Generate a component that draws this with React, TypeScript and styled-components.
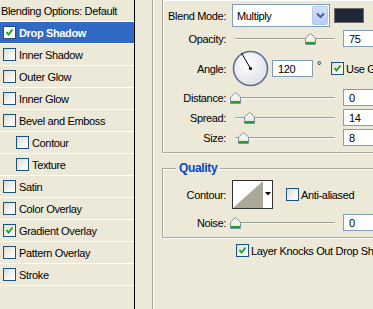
import React from 'react'
import styled, { createGlobalStyle } from 'styled-components'

const GlobalStyle = createGlobalStyle`
  html, body {
    margin: 0;
    padding: 0;
    background: #ece9d8;
    overflow: hidden;
  }
  body {
    font-family: 'Liberation Sans', Arial, sans-serif;
    font-size: 11px;
    letter-spacing: -0.35px;
    color: #000;
  }
`

const Window = styled.div`
  display: flex;
  width: 373px;
  height: 309px;
  overflow: hidden;
  background: #ece9d8;
`

/* ---------- left style list ---------- */

const Sidebar = styled.div`
  width: 134px;
  flex: none;
  border-right: 1px solid #000;
  display: flex;
  flex-direction: column;
`

const ListRow = styled.div<{ $indent?: boolean; $selected?: boolean; $plain?: boolean }>`
  height: 21px;
  border-bottom: 1px solid #fff;
  display: flex;
  align-items: center;
  gap: 3px;
  padding-left: ${({ $indent, $plain }) => ($plain ? '1px' : $indent ? '16px' : '3px')};
  background: ${({ $selected }) => ($selected ? '#316ac5' : 'transparent')};
  color: ${({ $selected }) => ($selected ? '#fff' : '#000')};
  font-weight: ${({ $selected }) => ($selected ? 'bold' : 'normal')};
  white-space: nowrap;
`

const Box = styled.span<{ $flat?: boolean }>`
  width: 13px;
  height: 13px;
  box-sizing: border-box;
  flex: none;
  border: 1px solid #1c5180;
  background: ${({ $flat }) => ($flat ? '#fff' : 'linear-gradient(135deg, #dcdcd7 0%, #f4f4f0 60%, #ffffff 100%)')};
  display: inline-flex;
  align-items: center;
  justify-content: center;
`

const Checkbox = ({ checked, flat }: { checked?: boolean; flat?: boolean }) => (
  <Box $flat={flat}>
    {checked && (
      <svg width="9" height="9" viewBox="0 0 9 9">
        <path d="M1.5 4 L3.5 6.5 L7.5 1.5" fill="none" stroke="#21a121" strokeWidth="2" />
      </svg>
    )}
  </Box>
)

const styles = [
  { name: 'Drop Shadow', checked: true, selected: true },
  { name: 'Inner Shadow' },
  { name: 'Outer Glow' },
  { name: 'Inner Glow' },
  { name: 'Bevel and Emboss' },
  { name: 'Contour', indent: true },
  { name: 'Texture', indent: true },
  { name: 'Satin' },
  { name: 'Color Overlay' },
  { name: 'Gradient Overlay', checked: true },
  { name: 'Pattern Overlay' },
  { name: 'Stroke' },
]

/* ---------- right settings pane ---------- */

const Pane = styled.div`
  flex: 1;
  padding-left: 17px;
  overflow: hidden;
`

const OuterGroup = styled.div`
  height: 100%;
  border-left: 1px solid #aca899;
  box-shadow: inset 1px 0 0 #fff;
  padding-left: 9px;
`

const Group = styled.div`
  width: 260px;
  border: 1px solid #aca899;
  box-shadow: inset 1px 1px 0 #fff, 1px 1px 0 #fff;
`

const StructureGroup = styled(Group)`
  border-top: none;
  padding: 4px 0 6px;
`

const QualityGroup = styled(Group)`
  margin-top: 15px;
  padding-bottom: 6px;
`

const GroupTitle = styled.div`
  width: fit-content;
  height: 13px;
  margin: -7px 0 0 13px;
  padding: 0 3px;
  background: #ece9d8;
  color: #0046d5;
  font-weight: bold;
  font-size: 12px;
  line-height: 13px;
`

const Row = styled.div<{ $h: number; $mt?: number }>`
  display: flex;
  align-items: center;
  height: ${({ $h }) => $h}px;
  margin-top: ${({ $mt = 0 }) => $mt}px;
  white-space: nowrap;
`

const Label = styled.span`
  width: 63px;
  flex: none;
  text-align: right;
  margin-right: 6px;
`

const Select = styled.div`
  width: 98px;
  height: 23px;
  box-sizing: border-box;
  border: 1px solid #7f9db9;
  background: #fff;
  display: flex;
  align-items: center;
  justify-content: space-between;
  padding: 0 1px 0 4px;
`

const SelectButton = styled.span`
  width: 16px;
  height: 19px;
  border-radius: 2px;
  background: linear-gradient(180deg, #d6e2fc 0%, #b9cdf8 100%);
  border: 1px solid #b4c8f5;
  box-sizing: border-box;
  display: inline-flex;
  align-items: center;
  justify-content: center;
`

const Swatch = styled.span`
  width: 30px;
  height: 15px;
  margin-left: 4px;
  box-sizing: border-box;
  border: 1px solid #6d6d6d;
  background: #1e2638;
`

const Input = styled.div<{ $w?: number }>`
  width: ${({ $w = 40 }) => $w}px;
  height: 17px;
  box-sizing: border-box;
  flex: none;
  border: 1px solid #7f9db9;
  background: #fff;
  padding-left: 5px;
  display: flex;
  align-items: center;
`

const SliderWrap = styled.div`
  position: relative;
  width: 106px;
  height: 12px;
  flex: none;
  margin-right: 5px;

  &::before {
    content: '';
    position: absolute;
    left: 3px;
    right: 3px;
    top: 5px;
    height: 2px;
    border-radius: 1px;
    background: #f7f7f4;
    border-top: 1px solid #9d9d92;
    box-sizing: border-box;
  }
`

const Thumb = styled.svg`
  position: absolute;
  top: 0;
`

const Slider = ({ value }: { value: number }) => (
  <SliderWrap>
    <Thumb width="11" height="12" viewBox="0 0 11 12" style={{ left: value - 2 }}>
      <defs>
        <linearGradient id="th" x1="0" y1="0" x2="0" y2="1">
          <stop offset="0" stopColor="#ffffff" />
          <stop offset="1" stopColor="#e4e4dc" />
        </linearGradient>
      </defs>
      <path d="M0.5 5 L5.5 0.5 L10.5 5 V11.5 H0.5 Z" fill="url(#th)" stroke="#7d8f9c" />
      <rect x="1" y="9" width="9" height="2" fill="#21a121" />
    </Thumb>
  </SliderWrap>
)

const Dial = styled.svg`
  flex: none;
  margin-right: 3px;
`

const Degree = styled.span`
  margin: -8px 10px 0 4px;
`

const CheckLabel = styled.label`
  display: flex;
  align-items: center;
  gap: 2px;
`

const ContourBox = styled.div`
  width: 41px;
  height: 29px;
  box-sizing: border-box;
  border: 1px solid #333;
  background: #fff;
  display: flex;
  margin-right: 13px;
`

const ContourArrow = styled.span`
  flex: 1;
  display: flex;
  align-items: center;
  justify-content: center;
  padding-bottom: 2px;
`

const KnockRow = styled.div`
  display: flex;
  align-items: center;
  gap: 2px;
  margin: 6px 0 0 74px;
  white-space: nowrap;
`

export default function App() {
  return (
    <Window>
      <GlobalStyle />
      <Sidebar>
        <ListRow $plain>Blending Options: Default</ListRow>
        {styles.map((s) => (
          <ListRow key={s.name} $indent={s.indent} $selected={s.selected}>
            <Checkbox checked={s.checked} flat={s.selected} />
            {s.name}
          </ListRow>
        ))}
      </Sidebar>

      <Pane>
        <OuterGroup>
          <StructureGroup>
            <Row $h={23}>
              <Label>Blend Mode:</Label>
              <Select>
                Multiply
                <SelectButton>
                  <svg width="9" height="7" viewBox="0 0 9 7">
                    <path d="M1 1.5 L4.5 5 L8 1.5" fill="none" stroke="#4d6185" strokeWidth="2" />
                  </svg>
                </SelectButton>
              </Select>
              <Swatch />
            </Row>
            <Row $h={17} $mt={3}>
              <Label>Opacity:</Label>
              <Slider value={75} />
              <Input>75</Input>
            </Row>
            <Row $h={37} $mt={3}>
              <Label>Angle:</Label>
              <Dial width="37" height="37" viewBox="0 0 37 37">
                <defs>
                  <radialGradient id="dial" cx="0.4" cy="0.35" r="0.7">
                    <stop offset="0" stopColor="#ffffff" />
                    <stop offset="1" stopColor="#dedfe6" />
                  </radialGradient>
                </defs>
                <circle cx="18.5" cy="18.5" r="17" fill="url(#dial)" stroke="#5a6e9a" strokeWidth="1.6" />
                <line x1="18.5" y1="18.5" x2="9.5" y2="3" stroke="#000" strokeWidth="1" />
                <circle cx="18.5" cy="18.5" r="1.6" fill="#000" />
              </Dial>
              <Input $w={41}>120</Input>
              <Degree>°</Degree>
              <CheckLabel>
                <Checkbox checked />
                Use Global Light
              </CheckLabel>
            </Row>
            <Row $h={17} $mt={2}>
              <Label>Distance:</Label>
              <Slider value={0} />
              <Input>0</Input>
            </Row>
            <Row $h={17} $mt={3}>
              <Label>Spread:</Label>
              <Slider value={14} />
              <Input>14</Input>
            </Row>
            <Row $h={17} $mt={3}>
              <Label>Size:</Label>
              <Slider value={8} />
              <Input>8</Input>
            </Row>
          </StructureGroup>

          <QualityGroup>
            <GroupTitle>Quality</GroupTitle>
            <Row $h={29} $mt={5}>
              <Label>Contour:</Label>
              <ContourBox>
                <svg width="30" height="27" viewBox="0 0 30 27">
                  <path d="M0 27 L30 0 V27 Z" fill="#aca899" />
                </svg>
                <ContourArrow>
                  <svg width="6" height="4" viewBox="0 0 6 4">
                    <path d="M0 0 H6 L3 3.5 Z" fill="#000" />
                  </svg>
                </ContourArrow>
              </ContourBox>
              <CheckLabel>
                <Checkbox />
                Anti-aliased
              </CheckLabel>
            </Row>
            <Row $h={17} $mt={5}>
              <Label>Noise:</Label>
              <Slider value={0} />
              <Input>0</Input>
            </Row>
          </QualityGroup>

          <KnockRow>
            <Checkbox checked />
            Layer Knocks Out Drop Shadow
          </KnockRow>
        </OuterGroup>
      </Pane>
    </Window>
  )
}
